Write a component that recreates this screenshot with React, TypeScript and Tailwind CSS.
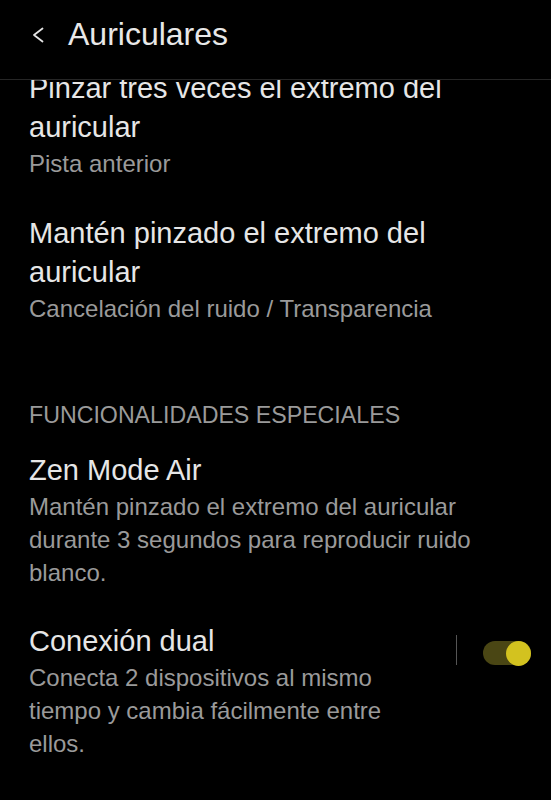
import React from "react";

type Setting = {
  title: string;
  desc: string;
};

const gestures: Setting[] = [
  {
    title: "Pinzar tres veces el extremo del auricular",
    desc: "Pista anterior",
  },
  {
    title: "Mantén pinzado el extremo del auricular",
    desc: "Cancelación del ruido / Transparencia",
  },
];

function Toggle({ on }: { on: boolean }) {
  return (
    <div
      className={`flex h-[24px] w-[48px] items-center rounded-full ${
        on ? "justify-end bg-[#4a4614]" : "justify-start bg-[#3a3a3a]"
      }`}
    >
      <div className="h-[25px] w-[25px] rounded-full bg-[#d3c21f]" />
    </div>
  );
}

function SettingText({ title, desc }: Setting) {
  return (
    <>
      <h2 className="text-[29px] leading-[39px] text-[#e6e6e6]">{title}</h2>
      <p className="text-[24px] leading-[33px] text-[#9a9a9a]">{desc}</p>
    </>
  );
}

export default function App() {
  return (
    <div
      className="flex h-[800px] w-full flex-col overflow-hidden bg-black"
      style={{ fontFamily: '"Liberation Sans", Arial, sans-serif' }}
    >
      {/* top bar */}
      <header className="h-[80px] shrink-0 border-b border-[#262626] pt-[14px]">
        <div className="flex h-[40px] items-center">
          <svg
            className="ml-[32px] mt-[2px]"
            width="12"
            height="16"
            viewBox="0 0 12 16"
            fill="none"
          >
            <path
              d="M10.5 1.5 L2 8 L10.5 14.5"
              stroke="#e4e4e4"
              strokeWidth="1.8"
              strokeLinecap="round"
              strokeLinejoin="round"
            />
          </svg>
          <h1 className="ml-[24px] text-[32px] leading-[40px] text-[#e8e8e8]">
            Auriculares
          </h1>
        </div>
      </header>

      {/* scrolled list */}
      <div className="flex-1 overflow-hidden">
        <div className="-mt-[11px] flex flex-col pl-[29px]">
          <div className="flex flex-col gap-[34px]">
            {gestures.map((g) => (
              <div key={g.title} className="w-[460px]">
                <SettingText {...g} />
              </div>
            ))}
          </div>

          <h3 className="mt-[75px] text-[23.2px] leading-[30px] text-[#9a9a9a]">
            FUNCIONALIDADES ESPECIALES
          </h3>

          <div className="mt-[21px] w-[470px]">
            <SettingText
              title="Zen Mode Air"
              desc="Mantén pinzado el extremo del auricular durante 3 segundos para reproducir ruido blanco."
            />
          </div>

          <div className="mt-[33px] flex items-start justify-between pr-[20px]">
            <div className="w-[390px]">
              <SettingText
                title="Conexión dual"
                desc="Conecta 2 dispositivos al mismo tiempo y cambia fácilmente entre ellos."
              />
            </div>
            <div className="mt-[13px] flex items-start gap-[26px]">
              <div className="h-[30px] w-px bg-[#555555]" />
              <div className="mt-[6px]">
                <Toggle on />
              </div>
            </div>
          </div>
        </div>
      </div>
    </div>
  );
}
